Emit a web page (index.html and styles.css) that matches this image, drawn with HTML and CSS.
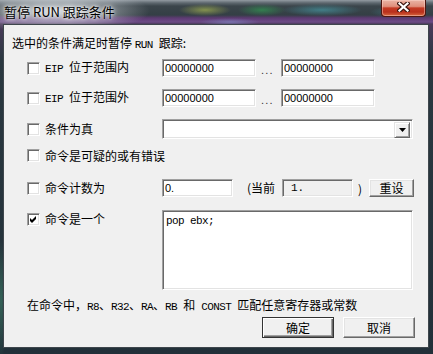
FILE: index.html
```html
<!DOCTYPE html>
<html lang="zh-CN">
<head>
  <meta charset="utf-8">
  <title>暂停 RUN 跟踪条件</title>
  <link rel="stylesheet" href="styles.css">
</head>
<body>
  <div class="window">
    <div class="titlebar">
      <span class="title">暂停 RUN 跟踪条件</span>
      <div class="close">
        <svg width="13" height="10" viewBox="0 0 13 10">
          <path d="M2.5 1.5 L10.5 8.5 M10.5 1.5 L2.5 8.5" stroke="#3b1610" stroke-width="4.4" stroke-linecap="square" fill="none"/>
          <path d="M2.5 1.5 L10.5 8.5 M10.5 1.5 L2.5 8.5" stroke="#fff" stroke-width="2.2" stroke-linecap="square" fill="none"/>
        </svg>
      </div>
    </div>
    <div class="client">
      <div class="intro">选中的条件满足时暂停 <span class="en">RUN </span>跟踪:</div>

      <div class="row r1">
        <label class="check"><span class="box"></span><span class="label"><span class="en">EIP </span>位于范围内</span></label>
        <span class="edit w-addr">00000000</span><span class="dots">...</span><span class="edit w-addr">00000000</span>
      </div>

      <div class="row r2">
        <label class="check"><span class="box"></span><span class="label"><span class="en">EIP </span>位于范围外</span></label>
        <span class="edit w-addr">00000000</span><span class="dots">...</span><span class="edit w-addr">00000000</span>
      </div>

      <div class="row r3">
        <label class="check"><span class="box"></span><span class="label">条件为真</span></label>
        <div class="combo">
          <span class="combo-btn">
            <svg width="7" height="4" viewBox="0 0 7 4"><path d="M0 0 H7 L3.5 4 Z" fill="#000"/></svg>
          </span>
        </div>
      </div>

      <div class="row r4">
        <label class="check"><span class="box"></span><span class="label">命令是可疑的或有错误</span></label>
      </div>

      <div class="row r5">
        <label class="check"><span class="box"></span><span class="label">命令计数为</span></label>
        <span class="edit w-count">0.</span>
        <span class="current">(当前</span>
        <span class="edit readonly">1.</span>
        <span class="paren">)</span>
        <span class="btn small">重设</span>
      </div>

      <div class="row r6">
        <label class="check"><span class="box checked">
          <svg width="7" height="7" viewBox="0 0 7 7"><path d="M0 2 L2 4 L6 0 L6 3 L2 7 L0 5 Z" fill="#000"/></svg>
        </span><span class="label">命令是一个</span></label>
        <div class="memo">pop ebx;</div>
      </div>

      <div class="note">在命令中，<span class="en">R8</span>、<span class="en">R32</span>、<span class="en">RA</span>、<span class="en">RB </span>和<span class="en"> CONST </span>匹配任意寄存器或常数</div>

      <div class="buttons">
        <span class="btn default">确定</span>
        <span class="btn">取消</span>
      </div>
    </div>
  </div>
</body>
</html>
```

FILE: styles.css
```css
:root {
  --face: #f0f0f0;
  --shadow: #a0a0a0;
  --dark: #696969;
  --light: #e3e3e3;
}
/* reset */
*, *::before, *::after {
  box-sizing: border-box;
  margin: 0;
  padding: 0;
}
html, body {
  width: 433px;
  height: 354px;
  overflow: hidden;
}
body {
  font-family: "Noto Sans CJK SC", sans-serif;
  font-size: 12px;
  color: #000;
}
.en {
  font-family: "Liberation Mono", "Noto Sans CJK SC", monospace;
  font-size: 11px;
  letter-spacing: -0.6px;
  white-space: pre;
}

/* glass frame */
.window {
  width: 433px;
  height: 354px;
  display: flex;
  flex-direction: column;
  background:
    radial-gradient(ellipse 95px 22px at 55px 11px, rgba(214,219,224,0.97), rgba(214,219,224,0)),
    radial-gradient(ellipse 26px 6px at 205px 10px, rgba(150,165,80,0.8), rgba(150,165,80,0)),
    radial-gradient(ellipse 24px 6px at 262px 10px, rgba(50,140,80,0.8), rgba(50,140,80,0)),
    radial-gradient(ellipse 40px 6px at 322px 10px, rgba(70,150,160,0.7), rgba(70,150,160,0)),
    radial-gradient(ellipse 30px 6px at 400px 12px, rgba(70,140,150,0.6), rgba(70,140,150,0)),
    radial-gradient(ellipse 30px 4px at 230px 22px, rgba(130,140,200,0.6), rgba(130,140,200,0)),
    radial-gradient(ellipse 6px 60px at 1px 300px, rgba(60,120,100,0.7), rgba(60,120,100,0)),
    linear-gradient(180deg, #939ba2 0, #5d676e 3px, #3b454b 6px, #343f45 15px, #5d3a72 18px, #6c4b86 22px, #4a3a5a 24px, #2a3840 60px, #223039 354px);
}
.titlebar {
  height: 24px;
  display: flex;
  justify-content: space-between;
  align-items: flex-start;
}
.title {
  padding-left: 4px;
  font-size: 13px;
  line-height: 24px;
  color: #000;
  text-shadow: 0 0 6px #fff, 0 0 3px #fff;
}
.close {
  width: 45px;
  height: 17px;
  margin-right: 7px;
  border: 1px solid #4e1610;
  border-top: none;
  border-radius: 0 0 4px 4px;
  background: linear-gradient(180deg, #eab4a6 0, #df8f7c 40%, #c43a24 50%, #b9301c 75%, #d8683e 100%);
  box-shadow: inset 0 0 0 1px rgba(255,220,210,0.45);
  display: flex;
  justify-content: center;
  padding-top: 2px;
}

/* client area */
.client {
  margin-left: 3px;
  width: 426px;
  height: 324px;
  border: 1px solid #3e464c;
  background: var(--face);
  padding-top: 10px;
  display: flex;
  flex-direction: column;
}
.intro {
  padding-left: 8px;
  height: 16px;
  line-height: 16px;
}
.row {
  display: flex;
  align-items: center;
  padding-left: 23px;
}
.r1 { margin-top: 8px; height: 18px; }
.r2 { margin-top: 12px; height: 18px; }
.r3 { margin-top: 12px; height: 20px; }
.r4 { margin-top: 9px; height: 15px; }
.r5 { margin-top: 16px; height: 18px; }
.r6 { margin-top: 13px; height: 80px; align-items: flex-start; }
.r6 .check { margin-top: 1px; }

.check {
  width: 135px;
  flex: none;
  display: flex;
  align-items: center;
  gap: 5px;
  line-height: 16px;
  white-space: nowrap;
}
.box {
  width: 13px;
  height: 13px;
  flex: none;
  background: #fff;
  border: 1px solid;
  border-color: var(--shadow) #fff #fff var(--shadow);
  box-shadow: inset 1px 1px 0 var(--dark), inset -1px -1px 0 var(--light);
  display: flex;
  align-items: center;
  justify-content: center;
}

/* sunken edits */
.edit, .combo, .memo {
  background: #fff;
  border: 1px solid;
  border-color: var(--shadow) #fff #fff var(--shadow);
  box-shadow: inset 1px 1px 0 var(--dark), inset -1px -1px 0 var(--light);
}
.edit {
  height: 18px;
  padding-left: 2px;
  font-family: "Liberation Sans", Arial, sans-serif;
  font-size: 11px;
  line-height: 17px;
}
.w-addr { width: 94px; }
.w-count { width: 71px; }
.dots {
  width: 25px;
  padding: 4px 0 0 5px;
  font-family: "Liberation Sans", Arial, sans-serif;
  font-size: 11px;
  letter-spacing: 1.2px;
  color: #333;
}
.combo {
  width: 251px;
  height: 20px;
  padding: 2px;
  display: flex;
  justify-content: flex-end;
}
.combo-btn {
  width: 16px;
  height: 16px;
  background: var(--face);
  border: 1px solid;
  border-color: var(--light) var(--dark) var(--dark) var(--light);
  box-shadow: inset 1px 1px 0 #fff, inset -1px -1px 0 var(--shadow);
  display: flex;
  align-items: center;
  justify-content: center;
}
.current {
  margin-left: 14px;
  width: 35px;
  line-height: 16px;
}
.readonly {
  width: 71px;
  background: var(--face);
  padding-left: 8px;
  font-family: "Liberation Mono", monospace;
  font-size: 11px;
}
.paren {
  margin-left: 5px;
  width: 11px;
}
.memo {
  width: 251px;
  height: 80px;
  padding: 4px 3px;
  font-family: "Liberation Mono", monospace;
  font-size: 11px;
  letter-spacing: -0.6px;
  line-height: 12px;
}

.note {
  margin-top: 8px;
  padding-left: 23px;
  height: 14px;
  line-height: 14px;
}

/* buttons */
.btn {
  width: 72px;
  height: 21px;
  background: var(--face);
  border: 1px solid;
  border-color: #fff var(--dark) var(--dark) #fff;
  box-shadow: inset -1px -1px 0 var(--shadow), inset 1px 1px 0 var(--light);
  text-align: center;
  line-height: 19px;
  font-size: 12px;
}
.btn.small {
  width: 45px;
  height: 18px;
  line-height: 16px;
}
.btn.default {
  border-color: #333;
  box-shadow: inset 1px 1px 0 #fff, inset -1px -1px 0 var(--dark), inset -2px -2px 0 var(--shadow);
}
.buttons {
  margin-top: 5px;
  display: flex;
  justify-content: flex-end;
  gap: 9px;
  padding-right: 13px;
}
```
